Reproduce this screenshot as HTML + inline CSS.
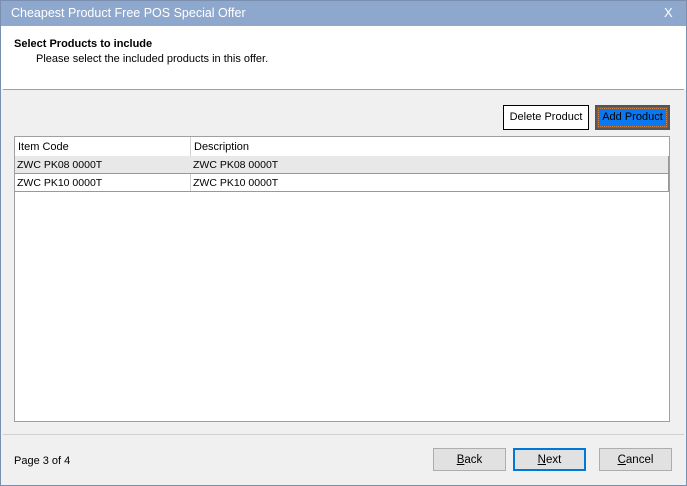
<!DOCTYPE html><html><head><style>
body{margin:0;width:687px;height:486px;position:relative;background:#f0f0f0;font-family:"Liberation Sans",sans-serif;font-size:11px;color:#000;overflow:hidden}
.a{position:absolute;box-sizing:border-box}
.btn{position:absolute;box-sizing:border-box;border:1px solid #adadad;background:#e1e1e1;text-align:center;line-height:22px;font-size:11.5px}
</style></head><body>
<div class="a" style="left:0;top:0;width:687px;height:486px;border:1px solid #7a8fb0"></div>
<div class="a" style="left:1px;top:1px;width:685px;height:25px;background:#8ea8cd;color:#fff;font-size:12.5px;padding:5px 0 0 10px">Cheapest Product Free POS Special Offer</div>
<div class="a" style="left:664px;top:5px;color:#fff;font-size:13px">X</div>
<div class="a" style="left:1px;top:26px;width:685px;height:63px;background:#fff"></div>
<div class="a" style="left:3px;top:89px;width:681px;height:1px;background:#a0a0a0"></div>
<div class="a" style="left:14px;top:38px;font-weight:bold">Select Products to include</div>
<div class="a" style="left:36px;top:53px">Please select the included products in this offer.</div>
<div class="a" style="left:503px;top:105px;width:86px;height:25px;border:1px solid #000;background:#fff;text-align:center;line-height:23px">Delete Product</div>
<div class="a" style="left:595px;top:105px;width:75px;height:25px;border:2px solid #555;background:#0a78f0;text-align:center;line-height:21px"><div class="a" style="left:1px;top:1px;right:1px;bottom:1px;border:1px dotted #d08040"></div>Add Product</div>
<div class="a" style="left:14px;top:136px;width:656px;height:286px;border:1px solid #a0a0a0;background:#fff"></div>
<div class="a" style="left:18px;top:141px">Item Code</div>
<div class="a" style="left:194px;top:141px">Description</div>
<div class="a" style="left:190px;top:137px;width:1px;height:55px;background:#d0d0d0"></div>
<div class="a" style="left:15px;top:156px;width:654px;height:18px;background:#e8e8e8;border-bottom:1px solid #999"></div>
<div class="a" style="left:15px;top:174px;width:654px;height:18px;border-bottom:1px solid #999"></div>
<div class="a" style="left:17px;top:159px;font-size:10.5px">ZWC PK08 0000T</div>
<div class="a" style="left:193px;top:159px;font-size:10.5px">ZWC PK08 0000T</div>
<div class="a" style="left:17px;top:177px;font-size:10.5px">ZWC PK10 0000T</div>
<div class="a" style="left:193px;top:177px;font-size:10.5px">ZWC PK10 0000T</div>
<div class="a" style="left:668px;top:156px;width:1px;height:36px;background:#999"></div>
<div class="a" style="left:3px;top:434px;width:681px;height:1px;background:#d0d0d0"></div>
<div class="a" style="left:14px;top:455px">Page 3 of 4</div>
<div class="btn" style="left:433px;top:448px;width:73px;height:23px"><u>B</u>ack</div>
<div class="btn" style="left:513px;top:448px;width:73px;height:23px;border:2px solid #0078d7;line-height:20px"><u>N</u>ext</div>
<div class="btn" style="left:599px;top:448px;width:73px;height:23px"><u>C</u>ancel</div>
</body></html>
